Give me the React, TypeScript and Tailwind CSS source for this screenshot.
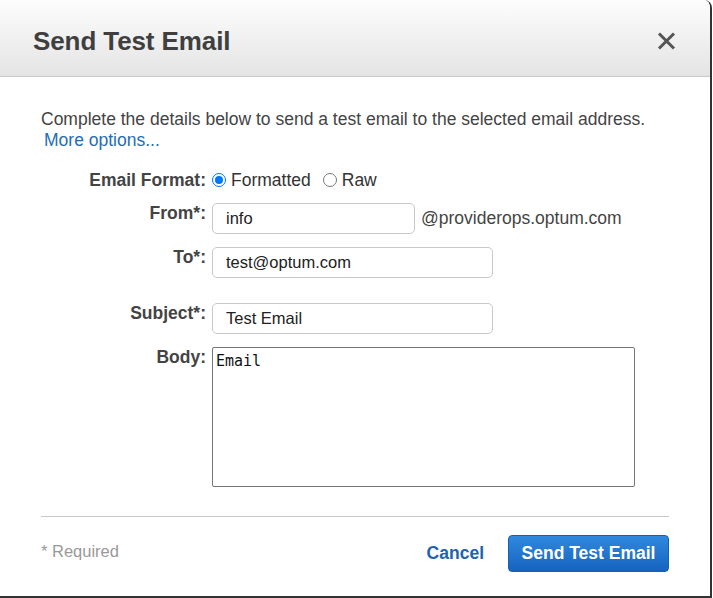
import { useState } from 'react';

const font = "font-['Liberation_Sans',Arial,sans-serif]";

const Radio = ({ checked, label, onClick }: { checked: boolean; label: string; onClick: () => void }) => (
  <button type="button" onClick={onClick} className="flex items-center gap-[5px]">
    <span
      className={`w-[14px] h-[14px] rounded-full border flex items-center justify-center bg-white ${
        checked ? 'border-[#0075ff] border-[1.5px]' : 'border-[#767676]'
      }`}
    >
      {checked && <span className="w-[8px] h-[8px] rounded-full bg-[#0075ff]" />}
    </span>
    <span className="text-[#333]">{label}</span>
  </button>
);

const App = () => {
  const [format, setFormat] = useState('formatted');

  return (
    <div className={`${font} w-[712px] h-[598px] bg-white border-r-2 border-b-2 border-[#333] rounded-tr-[8px] overflow-hidden flex flex-col text-[17.5px]`}>
      {/* Header */}
      <div className="h-[77px] shrink-0 flex items-center justify-between pt-[6px] pl-[33px] pr-[34px] bg-gradient-to-b from-[#fdfdfd] to-[#e4e4e4] border-b border-[#c8c8c8]">
        <h1 className="text-[26px] font-bold text-[#3f3f3f] tracking-[-0.1px]">Send Test Email</h1>
        <button type="button" className="text-[#555]">
          <svg width="19" height="18" viewBox="0 0 19 18">
            <path d="M2 1.5 L17 16.5 M17 1.5 L2 16.5" stroke="currentColor" strokeWidth="3" />
          </svg>
        </button>
      </div>

      {/* Body */}
      <div className="flex-1 flex flex-col px-[41px] pt-[32px]">
        <p className="leading-[21px] text-[#444]">
          Complete the details below to send a test email to the selected email address.
          <br />
          <a href="#" className="pl-[3px] text-[#1f6db8]">More options...</a>
        </p>

        <div className="mt-[19px] grid grid-cols-[165px_1fr] gap-x-[6px] items-start">
          <label className="text-right font-bold text-[#444] leading-[20px]">Email Format:</label>
          <div className="flex items-center gap-[12px] leading-[20px]">
            <Radio checked={format === 'formatted'} label="Formatted" onClick={() => setFormat('formatted')} />
            <Radio checked={format === 'raw'} label="Raw" onClick={() => setFormat('raw')} />
          </div>

          <label className="mt-[13px] text-right font-bold text-[#444] leading-[20px]">From*:</label>
          <div className="mt-[13px] flex items-center gap-[6px]">
            <input
              defaultValue="info"
              className="w-[203px] h-[31px] px-[13px] rounded-[5px] border border-[#c8c8c8] text-[16.5px] text-[#222] outline-none"
            />
            <span className="text-[#444]">@providerops.optum.com</span>
          </div>

          <label className="mt-[13px] text-right font-bold text-[#444] leading-[20px]">To*:</label>
          <input
            defaultValue="test@optum.com"
            className="mt-[13px] w-[281px] h-[31px] px-[13px] rounded-[5px] border border-[#c8c8c8] text-[16.5px] text-[#222] outline-none"
          />

          <label className="mt-[25px] text-right font-bold text-[#444] leading-[20px]">Subject*:</label>
          <input
            defaultValue="Test Email"
            className="mt-[25px] w-[281px] h-[31px] px-[13px] rounded-[5px] border border-[#c8c8c8] text-[16.5px] text-[#222] outline-none"
          />

          <label className="mt-[13px] text-right font-bold text-[#444] leading-[20px]">Body:</label>
          <textarea
            defaultValue="Email"
            className="mt-[13px] w-[423px] h-[140px] px-[3px] pt-[3px] border border-[#767676] rounded-[2px] resize-none outline-none font-['DejaVu_Sans_Mono',monospace] text-[15px] text-[#111] leading-[20px]"
          />
        </div>

        <div className="mt-[29px] border-t border-[#c8c8c8]" />

        <div className="mt-[18px] flex items-center justify-between">
          <span className="text-[#999] text-[16.5px] mt-[-4px]">* Required</span>
          <div className="flex items-center gap-[24px]">
            <button type="button" className="font-bold text-[17.5px] text-[#1d64ad]">Cancel</button>
            <button
              type="button"
              className="h-[37px] w-[161px] rounded-[4px] border border-[#1a5fae] bg-gradient-to-b from-[#3089de] to-[#1563bf] text-white font-bold text-[17.5px]"
            >
              Send Test Email
            </button>
          </div>
        </div>
      </div>
    </div>
  );
};

export default App;
